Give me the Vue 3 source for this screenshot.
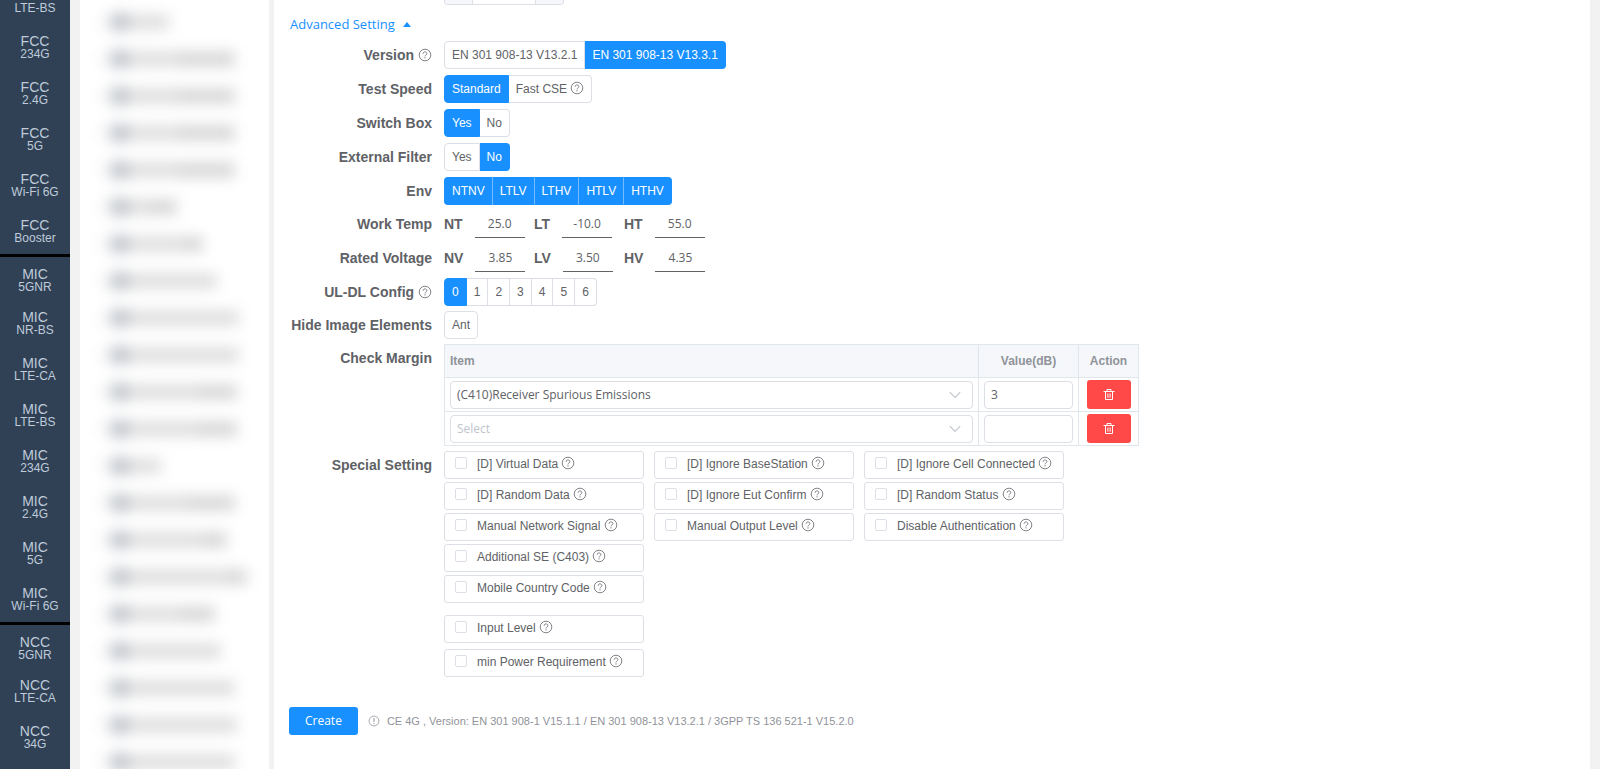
<script setup>
import { ref, h } from 'vue'

const HelpIcon = () =>
  h('svg', { class: 'help', viewBox: '0 0 14 14', width: 14, height: 14, fill: 'none', stroke: '#6b6e73', style: { verticalAlign: '-2px' }, 'aria-hidden': 'true' }, [
    h('circle', { cx: 7, cy: 7, r: 5.8, 'stroke-width': 0.85 }),
    h('path', { d: 'M5.1 5.8C5.1 4.6 5.9 3.9 7 3.9s1.9.7 1.9 1.7c0 1.3-1.9 1.4-1.9 2.8', 'stroke-width': 0.85 }),
    h('path', { d: 'M7 9.3v1.1', 'stroke-width': 1 })
  ])

const nav = [
  ['', 'LTE-BS'], ['FCC', '234G'], ['FCC', '2.4G'], ['FCC', '5G'], ['FCC', 'Wi-Fi 6G'], ['FCC', 'Booster'],
  ['MIC', '5GNR', true], ['MIC', 'NR-BS'], ['MIC', 'LTE-CA'], ['MIC', 'LTE-BS'], ['MIC', '234G'], ['MIC', '2.4G'],
  ['MIC', '5G'], ['MIC', 'Wi-Fi 6G'], ['NCC', '5GNR', true], ['NCC', 'LTE-CA'], ['NCC', '34G']
]

// Obscured records: text length and length of the darker ending, in pixels
const records = [
  [40, 0], [106, 58], [106, 58], [106, 58], [106, 58], [48, 30], [74, 20], [88, 0], [110, 0], [110, 0], [108, 40],
  [108, 40], [32, 0], [106, 50], [98, 26], [118, 20], [86, 36], [92, 0], [106, 0], [108, 0], [106, 0]
]

const version = ref('EN 301 908-13 V13.3.1')
const radios = [
  { label: 'Version', help: true, options: ['EN 301 908-13 V13.2.1', 'EN 301 908-13 V13.3.1'], value: version },
  { label: 'Test Speed', options: ['Standard', 'Fast CSE'], value: ref('Standard') },
  { label: 'Switch Box', options: ['Yes', 'No'], value: ref('Yes') },
  { label: 'External Filter', options: ['Yes', 'No'], value: ref('No') }
]
const envs = ['NTNV', 'LTLV', 'LTHV', 'HTLV', 'HTHV']
const envValue = ref([...envs])
const measures = [
  { label: 'Work Temp', fields: [['NT', '25.0'], ['LT', '-10.0'], ['HT', '55.0']] },
  { label: 'Rated Voltage', fields: [['NV', '3.85'], ['LV', '3.50'], ['HV', '4.35']] }
]
const uldl = ref('0')
const hidden = ref([])
const margins = ref([
  { item: '(C410)Receiver Spurious Emissions', value: '3' },
  { item: '', value: '' }
])
const special = [
  ['[D] Virtual Data', '[D] Ignore BaseStation', '[D] Ignore Cell Connected'],
  ['[D] Random Data', '[D] Ignore Eut Confirm', '[D] Random Status'],
  ['Manual Network Signal', 'Manual Output Level', 'Disable Authentication'],
  ['Additional SE (C403)'],
  ['Mobile Country Code']
]
const levels = ['Input Level', 'min Power Requirement']
</script>

<template>
  <div class="page">
    <nav class="side">
      <a v-for="([org, band, first], i) in nav" :key="i" href="#" class="side-item" :class="{ first }">
        <span class="org">{{ org }}</span>
        <span class="band">{{ band }}</span>
      </a>
    </nav>

    <aside class="records">
      <div class="blurred" aria-hidden="true">
        <div v-for="([len, dark], i) in records" :key="i" class="record">
          <i class="dot"></i>
          <i class="mark"></i>
          <i class="line" :style="{ width: len - dark + 'px' }"></i>
          <i class="line dark" :style="{ width: dark + 'px' }"></i>
        </div>
      </div>
    </aside>

    <main class="main">
      <div class="stepper">
        <i class="step"></i><i class="step-value"></i><i class="step"></i>
      </div>
      <a href="#" class="advanced">Advanced Setting <i class="caret"></i></a>

      <form class="form" @submit.prevent>
        <section class="group wide">
          <div v-for="row in radios" :key="row.label" class="row">
            <span class="label">{{ row.label }} <HelpIcon v-if="row.help" /></span>
            <div class="buttons" role="radiogroup" :aria-label="row.label">
              <label v-for="o in row.options" :key="o" class="choice">
                <input v-model="row.value.value" type="radio" :name="row.label" :value="o" />
                <span>{{ o }} <HelpIcon v-if="o === 'Fast CSE'" /></span>
              </label>
            </div>
          </div>
          <div class="row">
            <span class="label">Env</span>
            <div class="buttons env">
              <label v-for="e in envs" :key="e" class="choice">
                <input v-model="envValue" type="checkbox" :value="e" />
                <span>{{ e }}</span>
              </label>
            </div>
          </div>
        </section>

        <section class="group wide">
          <div v-for="row in measures" :key="row.label" class="row">
            <span class="label">{{ row.label }}</span>
            <div class="measures">
              <label v-for="[name, value] in row.fields" :key="name" class="measure">
                <b>{{ name }}</b>
                <input type="text" :value="value" />
              </label>
            </div>
          </div>
          <div class="row">
            <span class="label">UL-DL Config <HelpIcon /></span>
            <div class="buttons" role="radiogroup" aria-label="UL-DL Config">
              <label v-for="n in 7" :key="n" class="choice">
                <input v-model="uldl" type="radio" name="uldl" :value="String(n - 1)" />
                <span>{{ n - 1 }}</span>
              </label>
            </div>
          </div>
        </section>

        <section class="group">
          <div class="row">
            <span class="label">Hide Image Elements</span>
            <div class="buttons">
              <label class="choice">
                <input v-model="hidden" type="checkbox" value="Ant" />
                <span>Ant</span>
              </label>
            </div>
          </div>
          <div class="row">
            <span class="label">Check Margin</span>
            <table class="table">
              <thead>
                <tr>
                  <th class="item">Item</th>
                  <th class="value">Value(dB)</th>
                  <th class="action">Action</th>
                </tr>
              </thead>
              <tbody>
                <tr v-for="(m, i) in margins" :key="i">
                  <td>
                    <div class="select">
                      <select v-model="m.item" aria-label="Item" :class="{ empty: !m.item }">
                        <option value="">Select</option>
                        <option>(C410)Receiver Spurious Emissions</option>
                      </select>
                      <svg viewBox="0 0 12 8" width="12" height="8" fill="none" stroke="#c0c4cc" stroke-width="1.1">
                        <path d="M.8 1.2 6 6.4l5.2-5.2" />
                      </svg>
                    </div>
                  </td>
                  <td><input v-model="m.value" class="number" type="text" aria-label="Value(dB)" /></td>
                  <td class="center">
                    <button type="button" class="delete" aria-label="Delete">
                      <svg viewBox="0 0 12 12" width="12" height="12" fill="none" stroke="#fff">
                        <path d="M.5 2.5h11M4 2.5v-2h4v2M2.5 2.5v8h7v-8M4.9 4.5v4.2M7.1 4.5v4.2" />
                      </svg>
                    </button>
                  </td>
                </tr>
              </tbody>
            </table>
          </div>
          <div class="row">
            <span class="label">Special Setting</span>
            <div class="special">
              <div v-for="(line, i) in special" :key="i" class="special-line">
                <label v-for="s in line" :key="s" class="check">
                  <input type="checkbox" /><span>{{ s }} <HelpIcon /></span>
                </label>
              </div>
              <div class="levels">
                <label v-for="s in levels" :key="s" class="check">
                  <input type="checkbox" /><span>{{ s }} <HelpIcon /></span>
                </label>
              </div>
            </div>
          </div>
        </section>

        <footer class="footer">
          <button type="submit" class="create">Create</button>
          <svg class="info" viewBox="0 0 12 12" width="12" height="12" fill="none" stroke="#909399">
            <circle cx="6" cy="6" r="4.9" stroke-width=".8" />
            <path d="M6 3v4M6 8v1" />
          </svg>
          <span class="note">CE 4G , Version: EN 301 908-1 V15.1.1 / EN 301 908-13 V13.2.1 / 3GPP TS 136 521-1 V15.2.0</span>
        </footer>
      </form>
    </main>
  </div>
</template>

<style>
body {
  margin: 0;
  background: #f2f2f2;
}
</style>

<style scoped>
* {
  box-sizing: border-box;
}
.page {
  display: flex;
  height: 100vh;
  overflow: hidden;
  padding-right: 10px;
  background: #f2f2f2;
  color: #606266;
  font: 12px/16px "Liberation Sans", Arial, sans-serif;
}
.side {
  flex: none;
  width: 70px;
  margin-top: -22px;
  margin-right: 10px;
  background: #304156;
}
.side-item {
  display: flex;
  flex-direction: column;
  align-items: center;
  height: 46px;
  padding-top: 10px;
  color: #bfcbd9;
  text-decoration: none;
}
.side-item.first {
  border-top: 3px solid #000;
}
.org {
  height: 14px;
  font-size: 14px;
  line-height: 14px;
}
.band {
  font-size: 12px;
  line-height: 12px;
}
.records {
  flex: none;
  width: 189px;
  margin-right: 5px;
  overflow: hidden;
  background: #fff;
}
.blurred {
  padding: 3px 0 0 18px;
  filter: blur(7px);
}
.record {
  display: flex;
  align-items: center;
  height: 37px;
}
.dot {
  width: 4px;
  height: 8px;
  margin-right: 8px;
  background: #e8e8e8;
}
.mark {
  width: 19px;
  height: 18px;
  background: #c4c8ce;
}
.line {
  height: 16px;
  background: #e0e0e0;
}
.line.dark {
  background: #d9d9d9;
}
.main {
  flex: 1;
  min-width: 0;
  padding: 0 15px;
  background: #fff;
}
.stepper {
  display: flex;
  width: 120px;
  height: 5px;
  margin-left: 155px;
  border: 1px solid #dcdfe6;
  border-top: 0;
  border-radius: 0 0 4px 4px;
  overflow: hidden;
}
.step {
  width: 27px;
  background: #f5f7fa;
}
.step-value {
  flex: 1;
  border: solid #dcdfe6;
  border-width: 0 1px;
}
.advanced {
  display: flex;
  align-items: center;
  width: max-content;
  height: 36px;
  margin-left: 1px;
  padding-top: 2px;
  color: #1890ff;
  font: 13px/20px "Open Sans", "Noto Sans", sans-serif;
  text-decoration: none;
}
.caret {
  margin-left: 8px;
  border: 4px solid transparent;
  border-top: 0;
  border-bottom: 5px solid #1890ff;
}
.group {
  display: flex;
  flex-direction: column;
  gap: 5px;
  margin-bottom: 5px;
}
.group.wide {
  gap: 6px;
}
.row {
  display: flex;
  align-items: flex-start;
}
.label {
  flex: none;
  width: 143px;
  margin-right: 12px;
  font-size: 14px;
  font-weight: 700;
  line-height: 28px;
  text-align: right;
  white-space: nowrap;
}
.buttons {
  display: flex;
}
.choice {
  position: relative;
  cursor: pointer;
}
.choice input {
  position: absolute;
  opacity: 0;
  margin: 0;
}
.choice span {
  display: block;
  height: 28px;
  padding: 0 7px;
  border: 1px solid #dcdfe6;
  border-left: 0;
  line-height: 26px;
  white-space: nowrap;
}
.choice:first-child span {
  border-left: 1px solid #dcdfe6;
  border-radius: 4px 0 0 4px;
}
.choice:last-child span {
  border-radius: 0 4px 4px 0;
}
.choice:only-child span {
  border-radius: 4px;
}
.choice input:checked + span {
  border-color: #1890ff;
  background: #1890ff;
  color: #fff;
}
.env .choice:not(:last-child) input:checked + span {
  border-right-color: #74bcff;
}
.measures {
  display: flex;
}
.measure {
  display: flex;
  width: 90px;
  height: 28px;
}
.measure b {
  margin-right: 12px;
  font-size: 14px;
  line-height: 28px;
}
.measure input {
  width: 50px;
  height: 28px;
  padding: 0;
  border: 0;
  border-bottom: 1px solid #606266;
  color: #606266;
  font: 12px/26px "Open Sans", "Noto Sans", sans-serif;
  text-align: center;
}
.table {
  width: 100%;
  max-width: 695px;
  border-collapse: separate;
  border-spacing: 0;
  border: solid #dfe6ec;
  border-width: 1px 0 0 1px;
  table-layout: fixed;
}
.table th,
.table td {
  height: 34px;
  padding: 0 5px;
  border: solid #dfe6ec;
  border-width: 0 1px 1px 0;
}
.table th {
  height: 33px;
  background: #f5f7fa;
  color: #909399;
  font-size: 12px;
}
.table .item {
  text-align: left;
}
.value {
  width: 100px;
}
.action {
  width: 60px;
}
.select {
  position: relative;
}
.select svg {
  position: absolute;
  top: 10px;
  right: 12px;
  pointer-events: none;
}
.select select,
.number {
  display: block;
  width: 100%;
  height: 28px;
  margin: 0;
  padding: 0 6px;
  border: 1px solid #dcdfe6;
  border-radius: 4px;
  appearance: none;
  background: #fff;
  color: #606266;
  font: 12px/26px "Open Sans", "Noto Sans", sans-serif;
}
.select select.empty {
  color: #c0c4cc;
}
.table .center {
  padding: 0 7px;
}
.delete {
  display: flex;
  align-items: center;
  justify-content: center;
  width: 44px;
  height: 29px;
  margin: 0 auto;
  padding: 0;
  border: 0;
  border-radius: 3px;
  background: #ff4949;
}
.special-line {
  display: flex;
  gap: 10px;
  margin-bottom: 3px;
}
.check {
  display: flex;
  align-items: center;
  width: 200px;
  height: 28px;
  padding: 0 10px 2px;
  border: 1px solid #dcdfe6;
  border-radius: 3px;
  white-space: nowrap;
}
.check input {
  appearance: none;
  width: 12px;
  height: 12px;
  margin: 0 10px 2px 0;
  border: 1px solid #dcdfe6;
  border-radius: 2px;
  background: #fff;
}
.levels {
  display: flex;
  flex-direction: column;
  gap: 6px;
  margin-top: 12px;
}
.footer {
  display: flex;
  align-items: center;
  margin-top: 30px;
}
.create {
  height: 28px;
  padding: 0 16px;
  border: 0;
  border-radius: 3px;
  background: #1890ff;
  color: #fff;
  font: 12px/28px "Open Sans", "Noto Sans", sans-serif;
}
.info {
  margin: 0 7px 0 10px;
}
.note {
  color: #909399;
  font-size: 11px;
}
</style>
